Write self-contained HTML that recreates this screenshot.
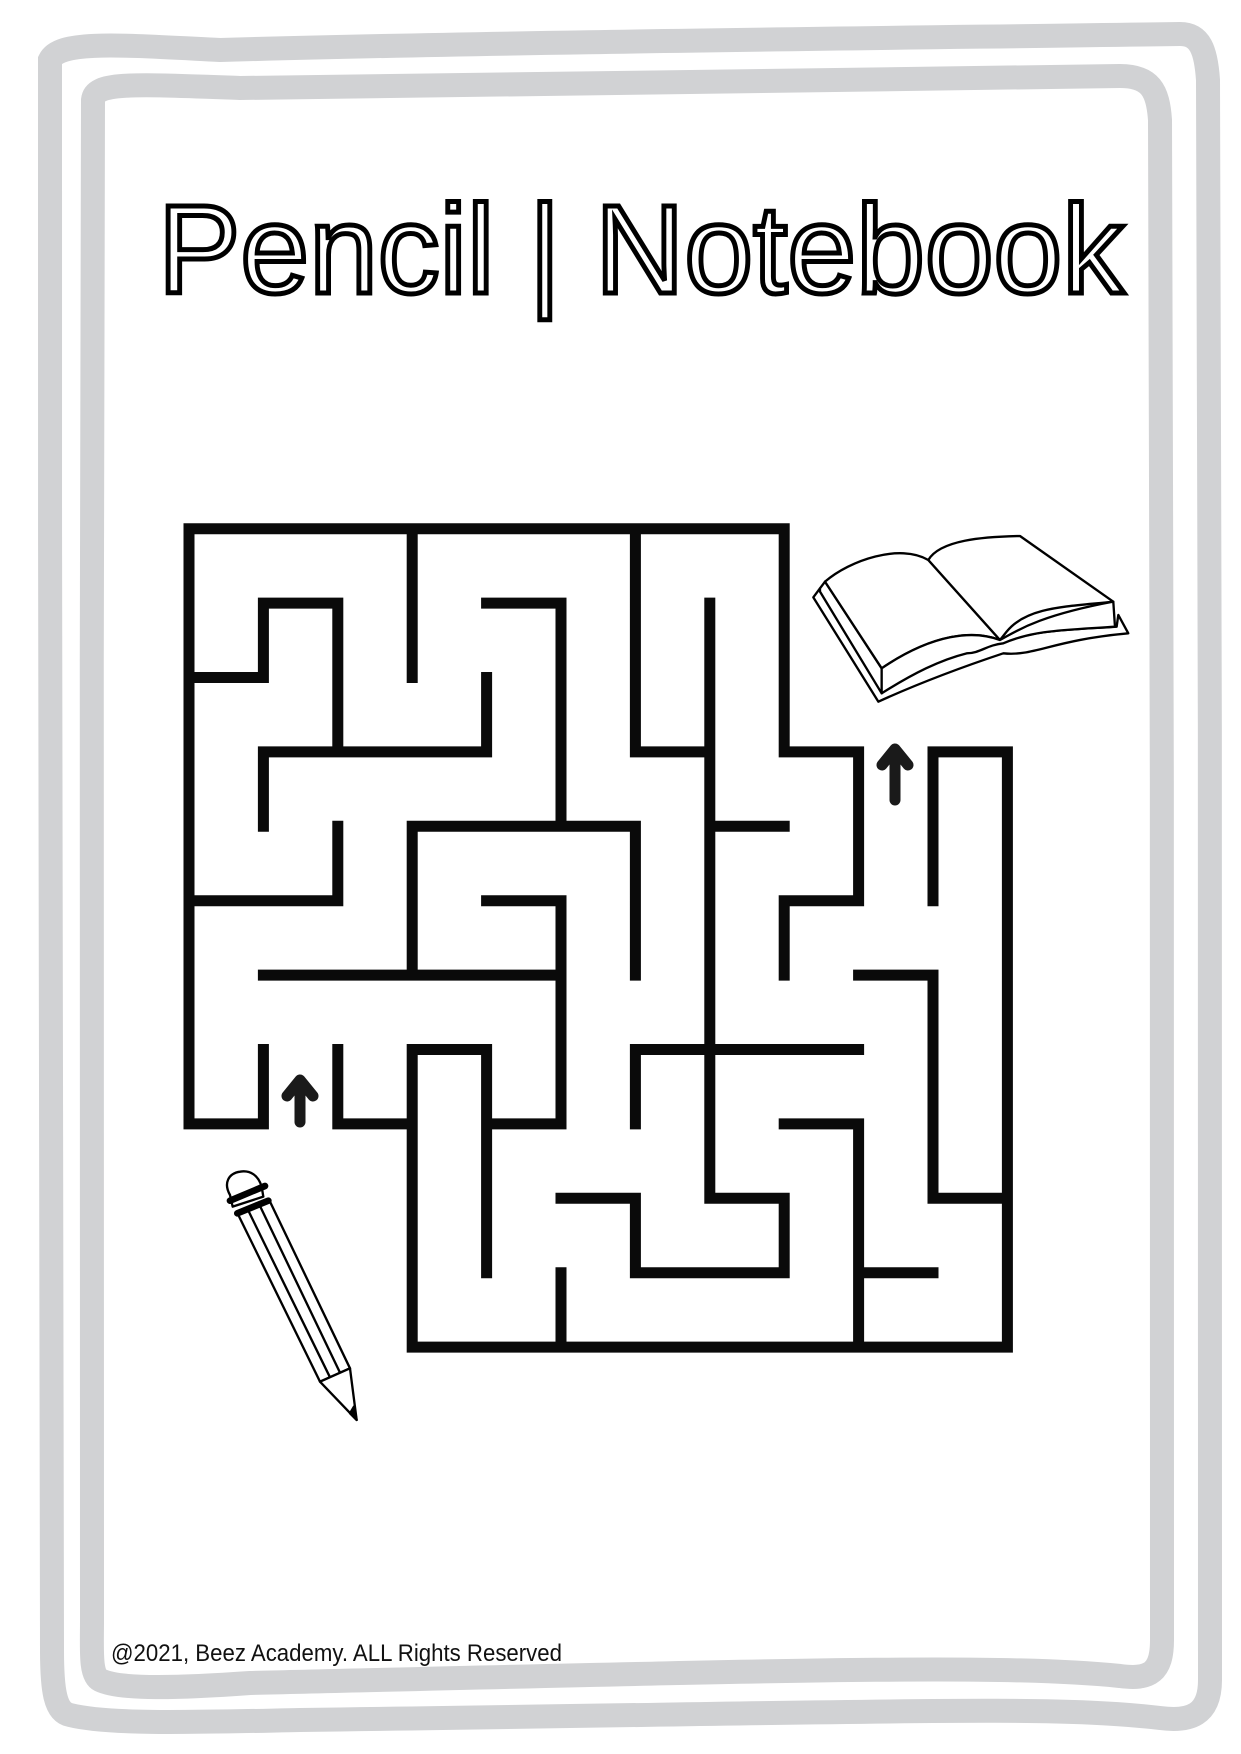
<!DOCTYPE html>
<html><head><meta charset="utf-8"><style>
html,body{margin:0;padding:0;background:#fff;}
svg{display:block;}
</style></head><body>
<svg width="1241" height="1754" viewBox="0 0 1241 1754" xmlns="http://www.w3.org/2000/svg">
<rect width="1241" height="1754" fill="#fff"/>
<!-- frames -->
<path d="M50,60 C60,40 120,45 220,50 C500,42 900,38 1180,34 C1200,34 1206,50 1208,80 C1212,600 1208,1200 1210,1680 C1210,1715 1190,1722 1160,1718 C1050,1705 900,1712 300,1720 C200,1722 110,1725 70,1715 C55,1712 52,1690 52,1650 C50,1200 50,600 50,60 Z" fill="none" stroke="#d1d2d4" stroke-width="24"/>
<path d="M93,100 C95,82 130,84 240,88 C500,84 900,80 1120,76 C1150,76 1158,90 1160,120 C1164,600 1160,1200 1162,1640 C1162,1672 1150,1680 1120,1676 C1000,1664 800,1670 250,1683 C180,1688 120,1690 100,1680 C90,1675 92,1650 92,1620 C90,1200 92,600 93,100 Z" fill="none" stroke="#d1d2d4" stroke-width="24"/>
<!-- title -->
<text x="158" y="293" font-family="Liberation Sans, sans-serif" font-size="126" textLength="966" lengthAdjust="spacingAndGlyphs" fill="#fff" stroke="#000" stroke-width="5">Pencil | Notebook</text>
<!-- maze -->
<g transform="translate(189,528.7) scale(74.4)" fill="none" stroke="#0a0a0a" stroke-width="0.148" stroke-linecap="square" stroke-linejoin="miter">
<path d="M0,0H8 M0,0V8H1V7 M2,7V8H3 M3,7V11 M3,7H4V10 M3,11H11V3H10V5 M1,1H2 M1,1V2H0 M2,1V3 M1,3H4 M1,3V4 M3,0V2 M4,1H5V4 M4,2V3 M6,0V3H7 M7,1V9H8V10H6V9H5 M5,10V11 M2,4V5H0 M3,6V4H6V6 M1,6H5 M4,5H5V8H4 M7,4H8 M8,0V3H9V5H8V6 M9,6H10V9H11 M6,7H9 M6,7V8 M8,8H9V11 M9,10H10"/>
</g>
<!-- arrows -->
<g fill="none" stroke="#1a1a1a" stroke-width="11" stroke-linecap="round" stroke-linejoin="round">
<path d="M300,1122V1082 M287,1096L300,1080L313,1096"/>
<path d="M895,800V752 M882,765L895,749L908,765"/>
</g>
<!-- book -->
<g transform="translate(800,520) scale(0.3333)" fill="#fff" stroke="#000" stroke-width="7" stroke-linejoin="round">
<path d="M40,232 L235,545 C400,470 550,420 610,400 C700,410 760,360 985,340 L955,285 L950,320 C800,330 700,330 600,370 C500,390 380,420 245,515 L60,205 Z"/>
<path d="M60,205 L75,185 L245,445 L245,520 L60,215 Z"/>
<path d="M75,185 C150,120 300,70 385,120 L600,360 C520,330 400,340 245,445 Z"/>
<path d="M385,120 C420,60 550,50 660,48 L940,245 C800,260 680,260 620,335 L600,360 Z"/>
<path d="M245,445 C400,340 520,330 600,360 C640,340 700,290 940,245 L945,320 C800,330 700,330 610,370 C560,375 540,400 500,400 C420,420 340,460 245,520 Z"/>
</g>
<!-- pencil -->
<g transform="translate(210,1160) scale(0.3333)" fill="#fff" stroke="#000" stroke-width="7" stroke-linejoin="round">
<path d="M85,165 L180,125 L420,625 L330,665 Z"/>
<path d="M115,152 L360,652 M150,138 L390,638" fill="none"/>
<path d="M330,665 L420,625 L440,780 Z"/>
<path d="M420,760 L440,780 L432,740 Z" fill="#000"/>
<path d="M60,105 C40,70 55,40 90,35 C120,30 145,45 155,80 L160,110 L68,140 Z"/>
<path d="M60,122 L165,78" stroke-width="20" stroke-linecap="round"/>
<path d="M82,160 L175,122" stroke-width="20" stroke-linecap="round"/>
</g>
<!-- footer -->
<text x="111" y="1661" font-family="Liberation Sans Narrow, Liberation Sans, sans-serif" font-size="24" textLength="451" lengthAdjust="spacingAndGlyphs" fill="#111">@2021, Beez Academy. ALL Rights Reserved</text>
</svg>
</body></html>
